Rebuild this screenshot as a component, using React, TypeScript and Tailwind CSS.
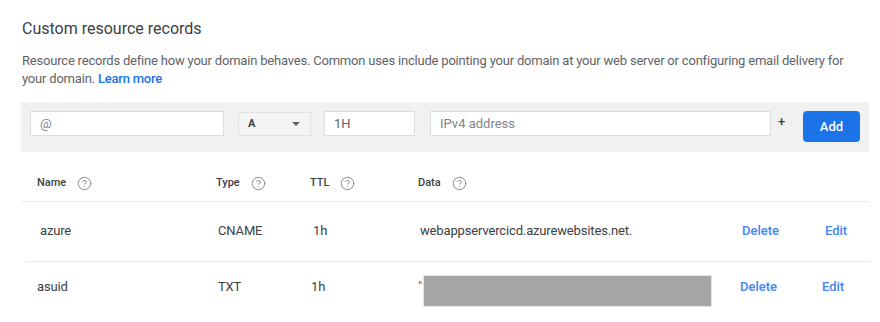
import { CircleHelp } from 'lucide-react'

const inputClass =
  'h-[25px] border border-[#dadce0] bg-white px-[9px] text-[13px] text-[#5f6368] placeholder:text-[#80868b] outline-none'

function HelpIcon() {
  return <CircleHelp className="w-[15px] h-[15px] text-[#80868b]" strokeWidth={1.5} />
}

function HeaderCell({ label, width }: { label: string; width: string }) {
  return (
    <div className={`${width} flex items-center gap-[11px]`}>
      <span>{label}</span>
      <HelpIcon />
    </div>
  )
}

export default function App() {
  return (
    <div className="w-[880px] h-[322px] overflow-hidden bg-white font-['Roboto',sans-serif]">
      <div className="pl-[21px] pr-[11px] pt-[17px]">
        <h2 className="pl-px text-[16px] leading-6 text-[#3c4043]">Custom resource records</h2>
        <p className="mt-[11px] pl-px text-[13px] leading-[18px] tracking-[-0.2px] text-[#5f6368]">
          Resource records define how your domain behaves. Common uses include pointing your domain at your web server or configuring email delivery for your domain.{' '}
          <a className="font-medium text-[#1a73e8]">Learn more</a>
        </p>

        {/* New record form */}
        <div className="mt-[14px] flex h-[50px] items-start bg-[#f1f1f1] pl-[9px] pr-[9px] pt-[9px]">
          <input className={`${inputClass} w-[194px]`} placeholder="@" />
          <div className="ml-[14px] mt-px flex h-[24px] w-[73px] items-center justify-between border border-[#e0e0e0] bg-[#f4f4f4] pl-[9px] pr-[10px]">
            <span className="text-[11px] font-bold text-[#3c4043]">A</span>
            <span className="h-0 w-0 border-x-[4px] border-t-[4px] border-x-transparent border-t-[#5f6368]" />
          </div>
          <input className={`${inputClass} ml-[13px] w-[91px]`} defaultValue="1H" />
          <input className={`${inputClass} ml-[15px] w-[341px]`} placeholder="IPv4 address" />
          <span className="ml-[7px] mt-[1px] text-[13px] font-medium leading-[20px] text-[#3c4043]">+</span>
          <button
            type="button"
            className="ml-auto h-[31px] w-[57px] rounded-[4px] bg-[#1a73e8] text-[13px] font-medium text-white"
          >
            Add
          </button>
        </div>

        {/* Header */}
        <div className="flex h-[50px] items-start border-b border-[#ebebeb] pl-[16px] pt-[22px] text-[11px] font-medium leading-[18px] text-[#3c4043]">
          <HeaderCell label="Name" width="w-[179px]" />
          <HeaderCell label="Type" width="w-[94px]" />
          <HeaderCell label="TTL" width="w-[108px]" />
          <HeaderCell label="Data" width="w-[200px]" />
        </div>

        {/* Rows */}
        <div className="ml-[5px] mr-[-2px] flex h-[60px] items-center border-b border-[#ebebeb] pl-[14px] pb-px text-[13px] tracking-[-0.15px] text-[#3c4043]">
          <div className="w-[178px]">azure</div>
          <div className="w-[95px]">CNAME</div>
          <div className="w-[107px]">1h</div>
          <div className="w-[322px]">webappservercicd.azurewebsites.net.</div>
          <div className="w-[83px] font-medium tracking-normal text-[#4285f4]">Delete</div>
          <div className="font-medium tracking-normal text-[#4285f4]">Edit</div>
        </div>
        <div className="flex h-[50px] items-center pl-[16px] text-[13px] tracking-[-0.15px] text-[#3c4043]">
          <div className="w-[181px]">asuid</div>
          <div className="w-[93px]">TXT</div>
          <div className="w-[107px]">1h</div>
          <div className="flex w-[322px] items-center">
            <span className="text-[#5f6368]">"</span>
            <div className="ml-px mt-[8px] h-[32px] w-[289px] border border-[#e6e6e6] bg-[#a6a6a6]" />
          </div>
          <div className="w-[82px] font-medium tracking-normal text-[#4285f4]">Delete</div>
          <div className="font-medium tracking-normal text-[#4285f4]">Edit</div>
        </div>
      </div>
    </div>
  )
}
